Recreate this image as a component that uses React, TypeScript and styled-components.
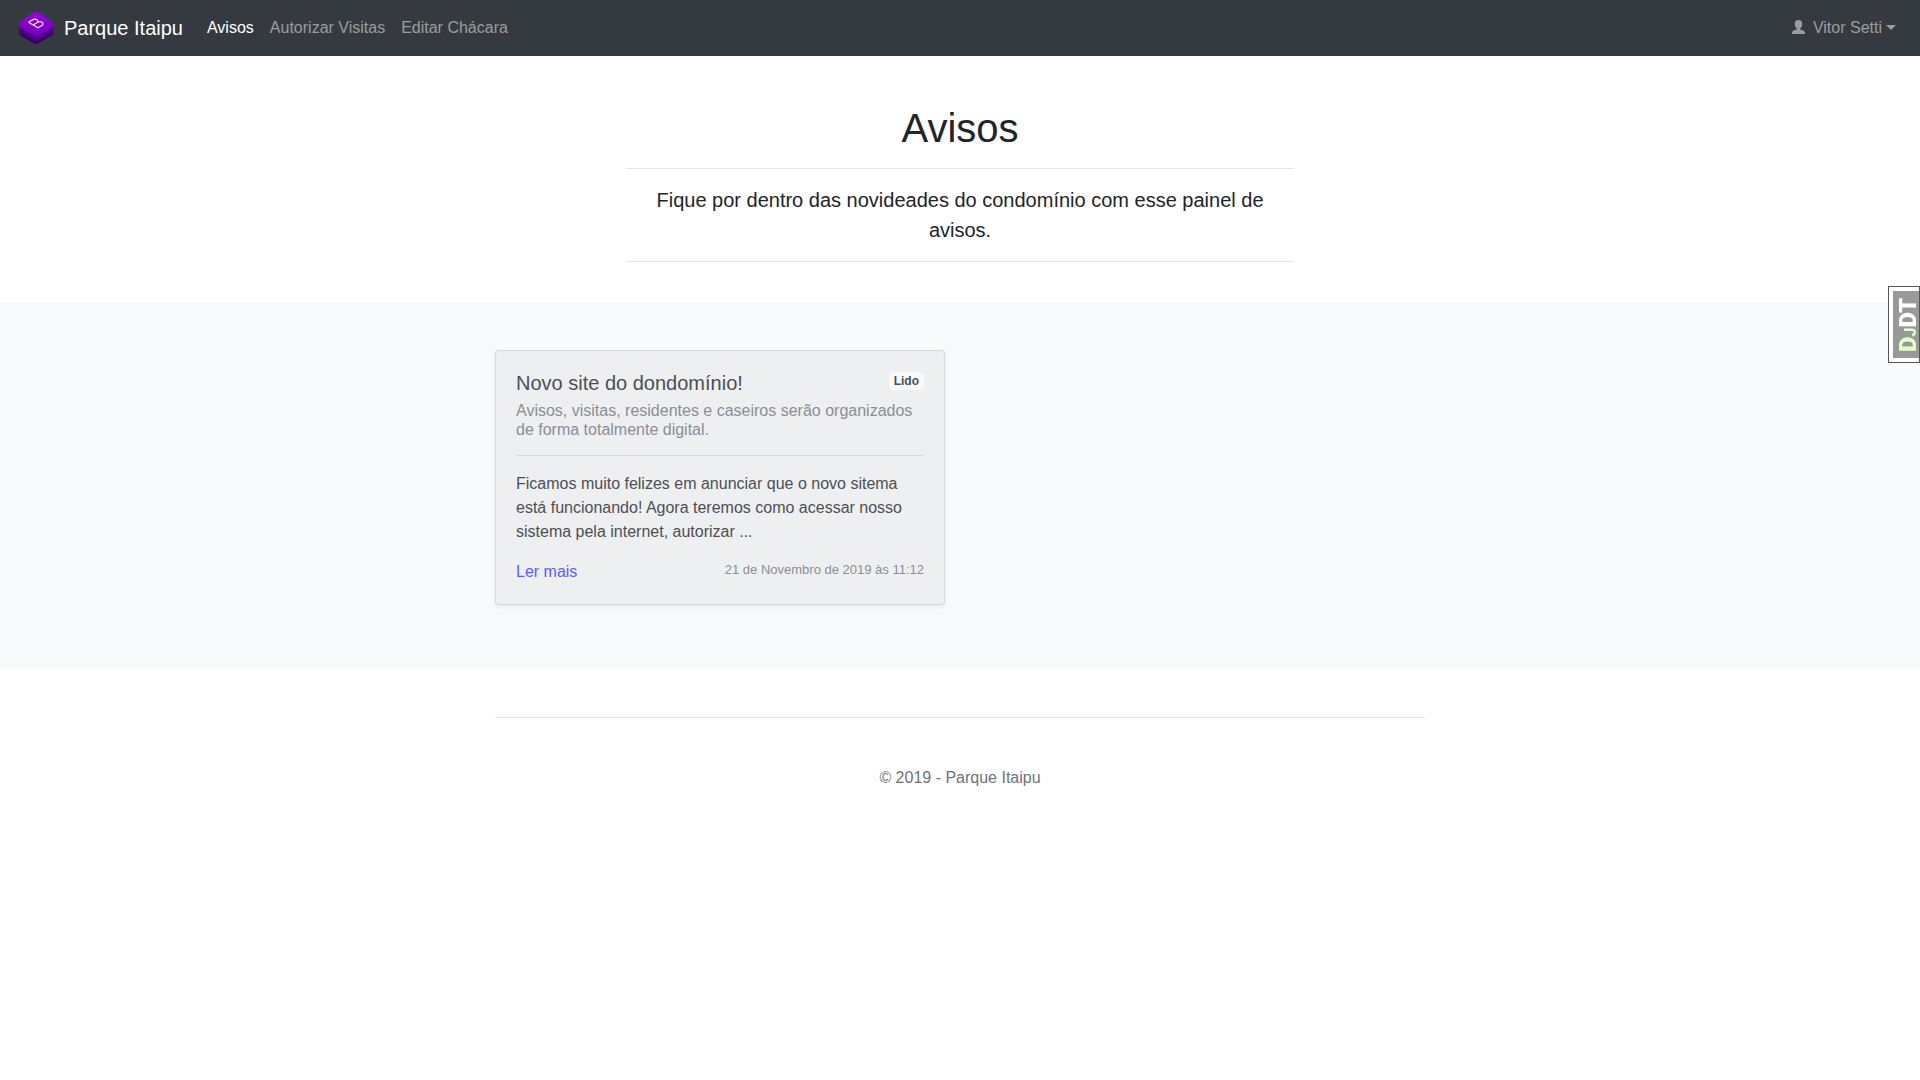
import React from "react";
import styled, { createGlobalStyle } from "styled-components";

const GlobalStyle = createGlobalStyle`
  *, *::before, *::after { box-sizing: border-box; }
  body {
    margin: 0;
    background: #fff;
    color: #212529;
    font-family: "Liberation Sans", Arial, sans-serif;
    font-size: 16px;
    line-height: 24px;
  }
  h1, h2, h3, p { margin: 0; font-weight: 400; }
  a { text-decoration: none; }
`;

const Navbar = styled.nav`
  display: flex;
  align-items: center;
  min-height: 56px;
  padding: 8px 16px;
  background: #343a40;
`;

const Brand = styled.a`
  display: flex;
  align-items: center;
  gap: 8px;
  margin-right: 16px;
  color: #fff;
  font-size: 20px;
  line-height: 30px;
`;

const NavList = styled.ul`
  display: flex;
  flex: 1;
  margin: 0;
  padding: 0;
  list-style: none;
`;

const NavLink = styled.a<{ $active?: boolean }>`
  display: block;
  padding: 8px;
  color: ${(p) => (p.$active ? "#fff" : "rgba(255, 255, 255, 0.5)")};
`;

const UserButton = styled.button`
  display: flex;
  align-items: center;
  padding: 8px;
  border: 0;
  background: none;
  color: rgba(255, 255, 255, 0.5);
  font: inherit;
  cursor: pointer;

  svg { margin-right: 8px; }

  &::after {
    content: "";
    margin: 0 0 2px 4px;
    border-top: 5px solid;
    border-right: 5px solid transparent;
    border-left: 5px solid transparent;
  }
`;

const Divider = styled.hr<{ $space?: number }>`
  margin: ${(p) => p.$space ?? 16}px 0;
  border: 0;
  border-top: 1px solid rgba(0, 0, 0, 0.1);
`;

const Intro = styled.header`
  max-width: 700px;
  margin: 0 auto;
  padding: 48px 16px 24px;
  text-align: center;
`;

const Title = styled.h1`
  font-size: 40px;
  line-height: 48px;
`;

const Lead = styled.p`
  font-size: 20px;
  line-height: 30px;
`;

const Band = styled.main`
  padding: 48px 0 64px;
  background: #f8f9fa;
`;

const Container = styled.div`
  max-width: 960px;
  margin: 0 auto;
  padding: 0 15px;
`;

const Grid = styled.div`
  display: grid;
  grid-template-columns: 1fr 1fr;
  gap: 30px;
`;

const Card = styled.article`
  padding: 20px;
  border: 1px solid rgba(0, 0, 0, 0.125);
  border-radius: 4px;
  background: #ecedef;
  box-shadow: 0 2px 4px rgba(0, 0, 0, 0.075);
  opacity: 0.8;
`;

const CardHead = styled.div`
  display: flex;
  align-items: flex-start;
  justify-content: space-between;
`;

const CardTitle = styled.h2`
  font-size: 20px;
  line-height: 24px;
`;

const Badge = styled.span`
  margin-top: 1px;
  padding: 3px 5px;
  border-radius: 4px;
  background: #f8f9fa;
  font-size: 12px;
  font-weight: 700;
  line-height: 12px;
`;

const Subtitle = styled.h3`
  margin-top: 6px;
  color: #6c757d;
  font-size: 16px;
  line-height: 19px;
`;

const CardFoot = styled.div`
  display: flex;
  align-items: flex-start;
  justify-content: space-between;
  margin-top: 16px;
`;

const MoreLink = styled.a`
  color: #3a30ff;
`;

const Stamp = styled.time`
  color: #6c757d;
  font-size: 13px;
  line-height: 20px;
`;

const Copyright = styled.p`
  color: #6c757d;
  text-align: center;
`;

const DebugHandle = styled.button`
  position: fixed;
  top: 286px;
  right: 0;
  display: flex;
  width: 32px;
  height: 77px;
  padding: 4px 0 4px 4px;
  border: 1px solid #555;
  background: #fff;
  cursor: pointer;
`;

const DebugLabel = styled.span`
  display: flex;
  flex: 1;
  align-items: center;
  justify-content: center;
  padding-right: 5px;
  background: #999;
  color: #fff;
  font: 900 24px/21px Roboto, sans-serif;
  writing-mode: vertical-rl;
  text-orientation: sideways;
  rotate: 180deg;
`;

const DebugAccent = styled.span`
  color: #dfffc8;

  small {
    font-size: 16px;
    line-height: 16px;
    text-transform: uppercase;
  }
`;

const Logo = () => (
  <svg width="40" height="38" viewBox="0 0 40 38" aria-hidden="true">
    <defs>
      <linearGradient id="top" x1="0" y1="0" x2="0" y2="1">
        <stop offset="0" stopColor="#9a00e0" />
        <stop offset="1" stopColor="#7300b8" />
      </linearGradient>
    </defs>
    <path d="M3 18 V24 Q3 26 5 27 L17 34 Q20 36 23 34 L35 27 Q37 26 37 24 V18Z" fill="#3d0066" />
    <path d="M3 15 V20 Q3 22 5 23 L17 30 Q20 32 23 30 L35 23 Q37 22 37 20 V15Z" fill="#560090" />
    <path d="M5 12 L17 4 Q20 2 23 4 L35 12 Q37 13 37 15 V17 Q37 18 35 19 L23 26 Q20 28 17 26 L5 19 Q3 18 3 17 V15 Q3 13 5 12Z" fill="url(#top)" />
    <path d="M12.500 13.300 L22 18.800 L25.500 16.800 C28.500 15 26.500 12.500 23.500 12.700 C22 12.800 20.500 14 17.500 16 M12.500 13.300 L16.500 10.900 C19 9.300 23 10.800 21.500 13" fill="none" stroke="#f3dcff" strokeWidth="1.300" strokeLinejoin="round" />
  </svg>
);

const UserIcon = () => (
  <svg width="13" height="16" viewBox="0 0 13 16" fill="currentColor" aria-hidden="true">
    <path d="M6.500 0 C4 0 2.800 1.600 2.800 4 C2.800 6 3.700 7.800 4.700 8.600 V9.600 C3 10.200 0 10.900 0 12.600 V14 H13 V12.600 C13 10.900 10 10.200 8.300 9.600 V8.600 C9.300 7.800 10.200 6 10.200 4 C10.200 1.600 9 0 6.500 0Z" />
  </svg>
);

const links = ["Avisos", "Autorizar Visitas", "Editar Chácara"];

export default function App() {
  return (
    <>
      <GlobalStyle />
      <Navbar>
        <Brand href="#">
          <Logo />
          Parque Itaipu
        </Brand>
        <NavList>
          {links.map((label, i) => (
            <li key={label}>
              <NavLink href="#" $active={i === 0}>{label}</NavLink>
            </li>
          ))}
        </NavList>
        <UserButton type="button" aria-haspopup="menu">
          <UserIcon />
          Vitor Setti
        </UserButton>
      </Navbar>

      <Intro>
        <Title>Avisos</Title>
        <Divider />
        <Lead>Fique por dentro das novideades do condomínio com esse painel de avisos.</Lead>
        <Divider />
      </Intro>

      <Band>
        <Container>
          <Grid>
            <Card>
              <CardHead>
                <CardTitle>Novo site do dondomínio!</CardTitle>
                <Badge>Lido</Badge>
              </CardHead>
              <Subtitle>
                Avisos, visitas, residentes e caseiros serão organizados de forma totalmente digital.
              </Subtitle>
              <Divider />
              <p>
                Ficamos muito felizes em anunciar que o novo sitema está funcionando! Agora teremos
                como acessar nosso sistema pela internet, autorizar ...
              </p>
              <CardFoot>
                <MoreLink href="#">Ler mais</MoreLink>
                <Stamp dateTime="2019-11-21T11:12">21 de Novembro de 2019 às 11:12</Stamp>
              </CardFoot>
            </Card>
          </Grid>
        </Container>
      </Band>

      <Container as="footer">
        <Divider $space={48} />
        <Copyright>© 2019 - Parque Itaipu</Copyright>
      </Container>

      <DebugHandle type="button">
        <DebugLabel>
          <span><DebugAccent>D<small>j</small></DebugAccent>DT</span>
        </DebugLabel>
      </DebugHandle>
    </>
  );
}
